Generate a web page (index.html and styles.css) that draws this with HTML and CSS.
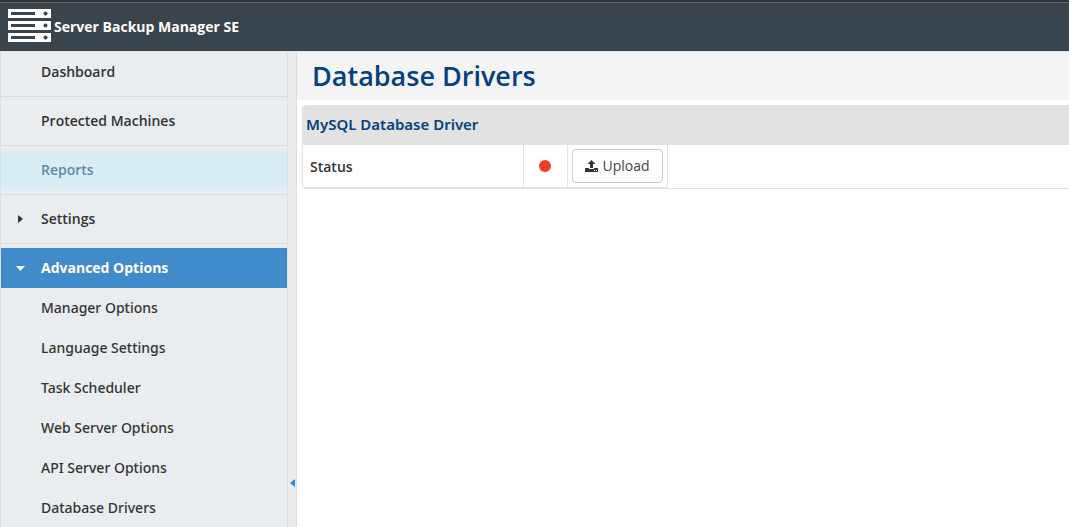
FILE: index.html
```html
<!DOCTYPE html>
<html lang="en">
<head>
<meta charset="utf-8">
<title>Server Backup Manager SE</title>
<link rel="stylesheet" href="styles.css">
</head>
<body>
<header class="topbar">
  <svg class="logo" viewBox="0 0 43 33" width="43" height="33" aria-hidden="true">
    <path fill="#fff" d="M0 0h43v9H0zM0 12h43v9H0zM0 24h43v9H0z"/>
    <path fill="#3a444d" d="M3 3h24v3H3zM3 15h24v3H3zM3 27h24v3H3z"/>
    <g fill="#3a444d"><circle cx="37.5" cy="4.5" r="2"/><circle cx="37.5" cy="16.5" r="2"/><circle cx="37.5" cy="28.5" r="2"/></g>
  </svg>
  <span class="brand">Server Backup Manager SE</span>
</header>
<div class="layout">
  <nav class="sidebar">
    <ul class="menu">
      <li class="menu-item"><a class="menu-link" href="#">Dashboard</a></li>
      <li class="menu-item"><a class="menu-link" href="#">Protected Machines</a></li>
      <li class="menu-item"><a class="menu-link hovered" href="#">Reports</a></li>
      <li class="menu-item"><a class="menu-link" href="#"><svg class="caret" viewBox="0 0 10 10" width="10" height="10" aria-hidden="true"><path fill="currentColor" d="M3 1v8l5-4z"/></svg>Settings</a></li>
      <li class="menu-item open"><a class="menu-link active" href="#"><svg class="caret" viewBox="0 0 10 10" width="10" height="10" aria-hidden="true"><path fill="currentColor" d="M1 3h9L5.500 8z"/></svg>Advanced Options</a>
        <ul class="submenu">
          <li><a class="sub-link" href="#">Manager Options</a></li>
          <li><a class="sub-link" href="#">Language Settings</a></li>
          <li><a class="sub-link" href="#">Task Scheduler</a></li>
          <li><a class="sub-link" href="#">Web Server Options</a></li>
          <li><a class="sub-link" href="#">API Server Options</a></li>
          <li><a class="sub-link" href="#">Database Drivers</a></li>
        </ul>
      </li>
    </ul>
  </nav>
  <button class="splitter" type="button" aria-label="Collapse menu">
    <svg viewBox="0 0 5 8" width="5" height="8" aria-hidden="true"><path fill="#3486cf" d="M5 0v8L0 4z"/></svg>
  </button>
  <main class="content">
    <h1 class="page-title">Database Drivers</h1>
    <section class="panel">
      <h2 class="panel-title">MySQL Database Driver</h2>
      <table class="drivers">
        <tr>
          <th class="label" scope="row">Status</th>
          <td class="state"><svg viewBox="0 0 12 12" width="12" height="12" role="img" aria-label="Not installed"><circle cx="6" cy="6" r="6" fill="#f03e23"/></svg></td>
          <td class="action"><button class="upload" type="button"><svg viewBox="0 0 13 12" width="13" height="12" aria-hidden="true"><path fill="#333" d="M6.500 0l4 4H8v4H5V4H2.500zM0 8h4v1h5V8h4v4H0z"/><path fill="#fff" d="M9 10h1v1H9zM11 10h1v1h-1z"/></svg>Upload</button></td>
          <td class="rest"></td>
        </tr>
      </table>
    </section>
  </main>
</div>
</body>
</html>
```
FILE: styles.css
```css
* { box-sizing: border-box; }
html, body { height: 100%; }
body {
  margin: 0;
  display: flex;
  flex-direction: column;
  overflow: hidden;
  background: #fff;
  color: #333;
  font: 14px/20px "Open Sans", "Noto Sans", sans-serif;
}
ul { list-style: none; margin: 0; padding: 0; }
a { color: inherit; text-decoration: none; }

.topbar {
  flex: none;
  display: flex;
  align-items: center;
  gap: 3px;
  padding: 6px 8px 9px;
  background: #3a444d;
  border-top: 2px solid #333436;
  box-shadow: inset 0 1px #5e6264;
}
.logo { display: block; margin-top: 1px; }
.brand { color: #fff; font-weight: 700; margin-top: 3px; }

.layout {
  flex: 1;
  min-height: 0;
  display: flex;
  border-top: 1px solid #e2e4e6;
}
.sidebar {
  flex: none;
  width: 287px;
  overflow: hidden;
  background: #e9edf0;
  border-left: 1px solid #ddd;
}
.menu-item { padding: 4px 0; border-bottom: 1px solid #d9dbdd; }
.menu-item:first-child { padding-top: 0; }
.menu-item.open { border-bottom: 0; }
.menu-link, .sub-link {
  display: flex;
  align-items: center;
  height: 40px;
  padding-left: 40px;
  font-weight: 600;
}
.hovered { background: #d9edf4; color: #5d89ab; }
.active { background: #428bca; color: #fff; font-weight: 700; }
.sub-link { font-family: "Noto Sans", "Open Sans", sans-serif; font-weight: 500; }
.caret { margin: 0 16px 0 -26px; }

.splitter {
  flex: none;
  width: 10px;
  padding: 387px 0 0;
  display: flex;
  justify-content: center;
  align-items: center;
  background: #ebebeb;
  border: solid #dedede;
  border-width: 0 1px;
}

.content { flex: 1; min-width: 0; }
.page-title {
  margin: 0 0 5px;
  padding: 8px 15px;
  background: #f4f4f4;
  color: #03417f;
  font-size: 27px;
  line-height: 32px;
  font-weight: 600;
}
.panel {
  margin-left: 5px;
  border: solid #e2e2e2;
  border-width: 0 0 1px 1px;
  border-radius: 4px 0 0 4px;
  overflow: hidden;
}
.panel-title {
  margin: 0;
  padding: 9px 3px 11px;
  background: #e2e2e2;
  color: #03417f;
  font-family: "Noto Sans", "Open Sans", sans-serif;
  font-size: 15px;
  line-height: 20px;
  font-weight: 600;
}
.drivers { width: 100%; border-collapse: separate; border-spacing: 0; }
.drivers th, .drivers td {
  padding: 4px;
  border: solid #e2e2e2;
  border-width: 0 1px 1px 0;
}
.drivers .rest { border: 0; }
.drivers .label { width: 221px; padding: 6px 4px 4px 7px; text-align: left; font-weight: 600; }
.drivers .state { width: 44px; text-align: center; }
.drivers .state svg { display: block; margin: 0 auto 0 11px; }
.drivers .action { width: 100px; }
.upload {
  display: flex;
  align-items: center;
  justify-content: center;
  gap: 4px;
  width: 100%;
  height: 34px;
  padding: 0;
  background: #fff;
  border: 1px solid #ccc;
  border-radius: 4px;
  color: #444;
  font: inherit;
}
```
